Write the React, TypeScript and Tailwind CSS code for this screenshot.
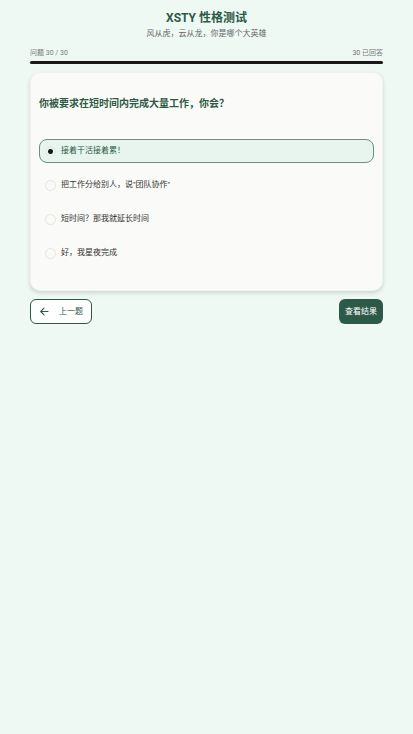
import { useState } from "react"

const total = 30

const question = {
    title: "你被要求在短时间内完成大量工作，你会？",
    options: [
        "接着干活接着累！",
        '把工作分给别人，说"团队协作"',
        "短时间？那我就延长时间",
        "好，我星夜完成",
    ],
}

const ArrowLeft = () => (
    <svg
        viewBox="0 0 10 10"
        className="w-[10px] h-[10px]"
        fill="none"
        stroke="currentColor"
        strokeWidth="1.1"
        strokeLinecap="round"
        strokeLinejoin="round"
        aria-hidden="true"
    >
        <path d="M9 4.5H1.8M5 1.2L1.7 4.5l3.3 3.3" />
    </svg>
)

export default function App() {
    const [selected, setSelected] = useState(0)

    return (
        <main className="min-h-screen px-[30px] pt-[9px] bg-[#eef9f4] font-[Roboto,'Noto_Sans_CJK_SC',sans-serif]">
            <header className="text-center">
                <h1 className="text-[12px] leading-[18px] font-bold text-[#2d5a47]">
                    XSTY 性格测试
                </h1>
                <p className="text-[8px] leading-[14px] text-[#666666]">
                    风从虎，云从龙，你是哪个大英雄
                </p>
            </header>

            <section className="mt-[7px]">
                <div className="flex justify-between text-[7px] leading-[10px] text-[#777777]">
                    <span>问题 {total} / {total}</span>
                    <span>{total} 已回答</span>
                </div>
                <div className="mt-[3px] h-[3px] rounded-full bg-[#171a18]" />
            </section>

            <section className="mt-2 px-2 pt-6 pb-[25px] rounded-[10px] border border-[#f1f3f0] bg-[#fafaf8] shadow-[0_2px_4px_rgba(0,0,0,0.15)]">
                <h2 className="text-[10px] leading-[14px] font-bold text-[#2d5a47]">
                    {question.title}
                </h2>
                <div className="mt-7 flex flex-col gap-[10px]">
                    {question.options.map((option, index) => (
                        <label
                            key={option}
                            className={`flex items-center gap-[5px] h-6 px-[5px] rounded-lg border text-[8px] leading-[14px] cursor-pointer ${
                                selected === index
                                    ? "border-[#6b9081] bg-[#e7f5ee] text-[#2d5a47]"
                                    : "border-transparent text-[#333333]"
                            }`}
                        >
                            <input
                                type="radio"
                                name="answer"
                                checked={selected === index}
                                onChange={() => setSelected(index)}
                                className="appearance-none w-[11px] h-[11px] shrink-0 rounded-full border border-[#e5e5e3] checked:border-[#e3eae6] checked:bg-[radial-gradient(circle,#111a16_2px,transparent_3px)]"
                            />
                            <span>{option}</span>
                        </label>
                    ))}
                </div>
            </section>

            <nav className="mt-2 flex justify-between text-[8px] leading-[14px]">
                <button className="flex items-center gap-[10px] h-[25px] px-2 rounded-md border border-[#2d5a47] bg-white text-[#2d5a47]">
                    <ArrowLeft />
                    上一题
                </button>
                <button className="h-[25px] px-[6px] rounded-md bg-[#2d5a47] text-white">
                    查看结果
                </button>
            </nav>
        </main>
    )
}
